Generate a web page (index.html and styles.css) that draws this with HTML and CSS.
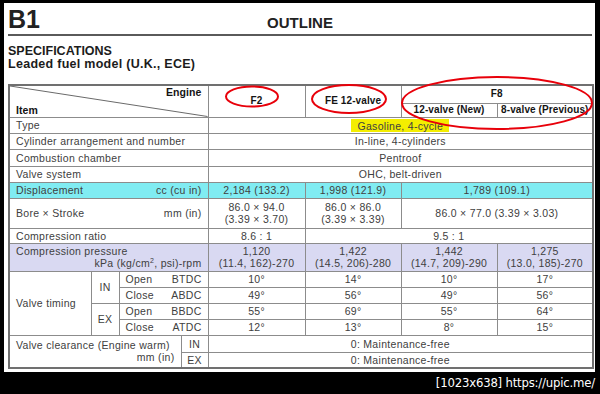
FILE: index.html
```html
<!DOCTYPE html>
<html>
<head>
<meta charset="utf-8">
<link rel="stylesheet" href="styles.css">
</head>
<body>
<div class="sheet">
  <div class="titlebar">
    <div class="b1">B1</div>
    <div class="outline">OUTLINE</div>
    <div></div>
  </div>
  <div class="spec-head">
    <div>SPECIFICATIONS</div>
    <div class="sub">Leaded fuel model (U.K., ECE)</div>
  </div>
  <table class="spec">
    <colgroup>
      <col class="c-a"><col class="c-b"><col class="c-c"><col class="c-d">
      <col class="c-v1"><col class="c-v"><col class="c-v"><col class="c-v">
    </colgroup>
    <thead>
      <tr class="h1">
        <th colspan="4" rowspan="2" class="corner">
          <svg class="diag" viewBox="0 0 100 100" preserveAspectRatio="none"><line x1="0" y1="0" x2="100" y2="100" stroke="#6a6a6a" stroke-width="1" vector-effect="non-scaling-stroke"/></svg>
          <div class="corner-in"><span class="eng">Engine</span><span class="item">Item</span></div>
        </th>
        <th rowspan="2">F2</th>
        <th rowspan="2">FE 12-valve</th>
        <th colspan="2">F8</th>
      </tr>
      <tr class="h2">
        <th>12-valve (New)</th>
        <th>8-valve (Previous)</th>
      </tr>
    </thead>
    <tbody>
      <tr class="r16"><td colspan="4" class="l">Type</td><td colspan="4"><span class="hl">Gasoline, 4-cycle</span></td></tr>
      <tr class="r16"><td colspan="4" class="l">Cylinder arrangement and number</td><td colspan="4">In-line, 4-cylinders</td></tr>
      <tr class="r17"><td colspan="4" class="l">Combustion chamber</td><td colspan="4">Pentroof</td></tr>
      <tr class="r16"><td colspan="4" class="l">Valve system</td><td colspan="4">OHC, belt-driven</td></tr>
      <tr class="r16 cyan"><td colspan="4" class="l"><div class="split"><span>Displacement</span><span>cc (cu in)</span></div></td><td>2,184 (133.2)</td><td>1,998 (121.9)</td><td colspan="2">1,789 (109.1)</td></tr>
      <tr class="r30"><td colspan="4" class="l"><div class="split"><span>Bore × Stroke</span><span>mm (in)</span></div></td><td>86.0 × 94.0<br>(3.39 × 3.70)</td><td>86.0 × 86.0<br>(3.39 × 3.39)</td><td colspan="2">86.0 × 77.0 (3.39 × 3.03)</td></tr>
      <tr class="r15"><td colspan="4" class="l">Compression ratio</td><td>8.6 : 1</td><td colspan="3">9.5 : 1</td></tr>
      <tr class="r28 lav"><td colspan="4" class="l"><div>Compression pressure</div><div class="r">kPa (kg/cm<sup>2</sup>, psi)-rpm</div></td><td>1,120<br>(11.4, 162)-270</td><td>1,422<br>(14.5, 206)-280</td><td>1,442<br>(14.7, 209)-290</td><td>1,275<br>(13.0, 185)-270</td></tr>
      <tr class="r16"><td rowspan="4" class="l">Valve timing</td><td rowspan="2">IN</td><td colspan="2" class="l"><div class="split"><span>Open</span><span>BTDC</span></div></td><td>10°</td><td>14°</td><td>10°</td><td>17°</td></tr>
      <tr class="r16"><td colspan="2" class="l"><div class="split"><span>Close</span><span>ABDC</span></div></td><td>49°</td><td>56°</td><td>49°</td><td>56°</td></tr>
      <tr class="r16"><td rowspan="2">EX</td><td colspan="2" class="l"><div class="split"><span>Open</span><span>BBDC</span></div></td><td>55°</td><td>69°</td><td>55°</td><td>64°</td></tr>
      <tr class="r16"><td colspan="2" class="l"><div class="split"><span>Close</span><span>ATDC</span></div></td><td>12°</td><td>13°</td><td>8°</td><td>15°</td></tr>
      <tr class="r17"><td colspan="3" rowspan="2" class="l"><div>Valve clearance (Engine warm)</div><div class="r">mm (in)</div></td><td class="nar">IN</td><td colspan="4">0: Maintenance-free</td></tr>
      <tr class="r16"><td class="nar">EX</td><td colspan="4">0: Maintenance-free</td></tr>
    </tbody>
  </table>
  <svg class="marks" width="600" height="394" viewBox="0 0 600 394">
    <ellipse cx="252" cy="96.5" rx="26" ry="10" fill="none" stroke="#e8000a" stroke-width="2"/>
    <ellipse cx="349" cy="99" rx="37" ry="14" fill="none" stroke="#e8000a" stroke-width="2"/>
    <ellipse cx="497" cy="103" rx="95" ry="26" fill="none" stroke="#e8000a" stroke-width="2"/>
  </svg>
</div>
<div class="footer">[1023x638] https://upic.me/</div>
</body>
</html>
```
FILE: styles.css
```css
html, body {
  margin: 0;
  background: #000;
}
body {
  font-family: "Liberation Sans", Arial, sans-serif;
  width: 600px;
  height: 394px;
  overflow: hidden;
}
.sheet {
  position: relative;
  margin: 3px 0 0 4px;
  width: 591px;
  height: 369px;
  background: #fff;
  box-sizing: border-box;
  padding: 0 3px 0 4px;
}
.titlebar {
  display: grid;
  grid-template-columns: 1fr auto 1fr;
  align-items: baseline;
  padding-top: 4px;
  height: 27px;
  border-bottom: 2px solid #5a5a5a;
}
.b1 {
  font-size: 25px;
  font-weight: bold;
  line-height: 25px;
  color: #222;
}
.outline {
  font-size: 15px;
  font-weight: bold;
  line-height: 15px;
  color: #222;
}
.spec-head {
  margin: 9px 0 13px;
  font-size: 12.5px;
  font-weight: bold;
  line-height: 13px;
  color: #1c1c1c;
}
.spec-head .sub {
  letter-spacing: 0.28px;
}
.spec {
  border-collapse: collapse;
  table-layout: fixed;
  width: 585px;
  font-size: 10.5px;
  line-height: 12px;
  color: #404040;
  letter-spacing: 0.3px;
  border: 2px solid #707070;
}
.c-a { width: 82px; }
.c-b { width: 28px; }
.c-c { width: 62px; }
.c-d { width: 27px; }
.c-v1 { width: 97px; }
.c-v { width: 96px; }
.spec td, .spec th {
  border: 1px solid #8c8c8c;
  padding: 0 6px;
  text-align: center;
  vertical-align: middle;
  white-space: nowrap;
}
.spec th {
  font-weight: bold;
  font-size: 10px;
  color: #141414;
  padding: 0 1px;
  letter-spacing: 0.1px;
}
.spec td.nar { padding: 0; }
.spec .l { text-align: left; }
.h1 { height: 18px; }
.h2 { height: 14px; }
.r15 { height: 15px; }
.r16 { height: 16px; }
.r17 { height: 17px; }
.r28 { height: 28px; }
.r30 { height: 30px; }
.spec th.corner {
  position: relative;
  padding: 0;
  font-size: 10.5px;
}
.diag {
  position: absolute;
  left: 0;
  top: 0;
  width: 100%;
  height: 100%;
}
.corner-in {
  position: relative;
  display: flex;
  flex-direction: column;
  justify-content: space-between;
  height: 30px;
  padding: 0 6px;
  box-sizing: border-box;
}
.eng { align-self: flex-end; }
.item { align-self: flex-start; }
.hl {
  display: inline-block;
  background: #f4ee00;
  padding: 1px 6px 0;
  line-height: 12px;
}
.cyan td { background: #80ecf2; }
.lav td { background: #d9d9f2; }
.split {
  display: flex;
  justify-content: space-between;
}
.r { text-align: right; }
sup {
  font-size: 7px;
  line-height: 0;
  vertical-align: 4px;
}
.marks {
  position: absolute;
  left: -4px;
  top: -3px;
  pointer-events: none;
}
.footer {
  height: 22px;
  line-height: 22px;
  text-align: right;
  padding-right: 5px;
  color: #fff;
  font-family: "DejaVu Sans Condensed", "DejaVu Sans", sans-serif;
  font-size: 13px;
  letter-spacing: -0.2px;
}
```
